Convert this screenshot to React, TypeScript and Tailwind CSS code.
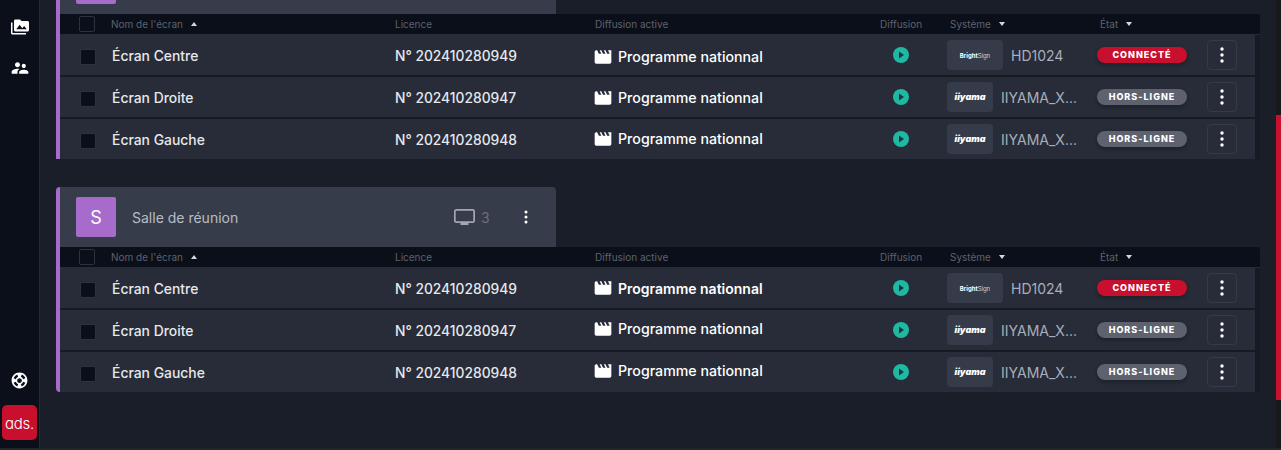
import { ReactNode } from 'react'
import { MdMovie, MdPermMedia, MdSupervisorAccount, MdSupport } from 'react-icons/md'

const screens = [
   { name: 'Écran Centre', licence: 'N° 202410280949', brand: 'brightsign', model: 'HD1024', online: true },
   { name: 'Écran Droite', licence: 'N° 202410280947', brand: 'iiyama', model: 'IIYAMA_X...', online: false },
   { name: 'Écran Gauche', licence: 'N° 202410280948', brand: 'iiyama', model: 'IIYAMA_X...', online: false },
]

// the programme cell does not sit on the same line in every row
const topProgram = ['mt-[4px]', 'mt-[2px]', 'mt-0']
const bottomProgram = ['mt-0', 'mb-[2px]', 'mb-[2px]']

const Caret = ({ up }: { up?: boolean }) => (
   <svg width="6" height="4" viewBox="0 0 6 4" className="ml-[8px] fill-[#d5d8de]">
      <path d={up ? 'M3 0 6 4H0z' : 'M0 0h6L3 4z'} />
   </svg>
)

const Dots = () => (
   <svg width="4" height="16" viewBox="0 0 4 16" className="fill-white">
      <circle cx="2" cy="2" r="1.7" />
      <circle cx="2" cy="8" r="1.7" />
      <circle cx="2" cy="14" r="1.7" />
   </svg>
)

const Play = () => (
   <svg width="16" height="16" viewBox="0 0 16 16">
      <circle cx="8" cy="8" r="8" className="fill-[#1fb8a3]" />
      <path d="M6 4.6 11 8l-5 3.4z" className="fill-[#21343f]" />
   </svg>
)

const Check = ({ dark }: { dark?: boolean }) => (
   <div className={`h-[16px] w-[16px] rounded-[2px] border border-[#2c3340] ${dark ? 'bg-[#0b0f19]' : 'bg-transparent'}`} />
)

const HeadCell = ({ className, children }: { className: string; children: ReactNode }) => (
   <div className={`flex items-center text-[10px] text-[#5d626e] ${className}`}>{children}</div>
)

const Row = ({ s, programClass, boldProgram }: { s: (typeof screens)[number]; programClass: string; boldProgram?: boolean }) => (
   <div className="flex h-[40px] w-[1195px] items-center bg-[#272c38]">
      <div className="ml-[20px] mt-[4px] w-[32px]">
         <Check dark />
      </div>
      <div className="mt-[2px] w-[283px] text-[13.9px] font-medium text-[#e6e8ec]">{s.name}</div>
      <div className="mt-[2px] w-[200px] text-[13.8px] font-medium text-[#e6e8ec]">{s.licence}</div>
      <div className={`flex w-[285px] items-center ${programClass}`}>
         <MdMovie size={20} className="-ml-[2px] text-white" />
         <span className={`ml-[5px] text-white ${boldProgram ? 'text-[14px] font-semibold' : 'text-[14.2px] font-medium'}`}>Programme nationnal</span>
      </div>
      <div className="w-[67px] pl-[13px]">
         <Play />
      </div>
      <div className="flex w-[150px] items-center">
         <div className={`flex h-[30px] items-center justify-center rounded-[4px] bg-[#353b48] ${s.brand === 'brightsign' ? 'w-[56px]' : 'w-[46px]'}`}>
            {s.brand === 'brightsign' ? (
               <span className="text-[6px] font-bold text-white">
                  Bright<span className="font-normal text-[#d5d8de]">Sign</span>
               </span>
            ) : (
               <span className="text-[9px] font-black italic text-white">iiyama</span>
            )}
         </div>
         <span className="ml-[8px] text-[14px] text-[#a9aeb8]">{s.model}</span>
      </div>
      <div className="w-[110px]">
         <div
            className={`flex h-[16px] w-[90px] items-center justify-center rounded-full text-[9px] font-extrabold tracking-[1px] text-white shadow-[0_2px_4px_rgba(0,0,0,0.3)] ${s.online ? 'bg-[#c8102e]' : 'bg-[#5e626e]'}`}
         >
            {s.online ? 'CONNECTÉ' : 'HORS-LIGNE'}
         </div>
      </div>
      <div className="flex h-[30px] w-[30px] items-center justify-center rounded-[4px] border border-[#343a47]">
         <Dots />
      </div>
   </div>
)

const Table = ({ programs, boldFirst }: { programs: string[]; boldFirst?: boolean }) => (
   <div className="w-[1200px] bg-[#161a22]">
      <div className="flex h-[20px] items-center rounded-tr-[3px] bg-[#0b0f19]">
         <div className="ml-[19px] w-[32px]">
            <Check />
         </div>
         <HeadCell className="w-[284px]">
            Nom de l'écran
            <Caret up />
         </HeadCell>
         <HeadCell className="w-[200px]">Licence</HeadCell>
         <HeadCell className="w-[285px]">Diffusion active</HeadCell>
         <HeadCell className="w-[70px]">Diffusion</HeadCell>
         <HeadCell className="w-[150px]">
            Système
            <Caret />
         </HeadCell>
         <HeadCell className="w-[100px]">
            État
            <Caret />
         </HeadCell>
      </div>
      <div className="flex flex-col gap-[2px] border-t border-[#272c38]">
         {screens.map((s, i) => (
            <Row key={s.name} s={s} programClass={programs[i]} boldProgram={boldFirst && i === 0} />
         ))}
      </div>
   </div>
)

export default function App() {
   return (
      <div className="flex h-[450px] w-[1281px] flex-col overflow-hidden bg-[#1a1e29] font-['Inter','Noto_Sans',sans-serif]">
         <div className="flex h-[448px]">
            <aside className="flex h-full w-[40px] flex-col items-center border-r border-[#262b36] bg-[#0b0f19] pt-[18px]">
               <MdPermMedia size={18} className="text-white" />
               <MdSupervisorAccount size={20} className="mt-[22px] text-white" />
               <MdSupport size={19} className="mt-auto text-white" />
               <div className="mb-[8px] mt-[15px] flex h-[35px] w-[35px] items-center justify-center rounded-[5px] bg-[#c8102e] pt-[1px] text-[15px] font-light leading-none tracking-[-0.2px] text-white [font-feature-settings:'cv11']">
                  ads.
               </div>
            </aside>
            <main className="ml-[16px] flex flex-col gap-[27px]">
               {/* first group is scrolled, only the foot of its header shows */}
               <section className="w-[1204px] border-l-[4px] border-[#a76bcc]">
                  <div className="h-[14px] w-[496px] bg-[#363c49] pl-[16px]">
                     <div className="h-[4px] w-[40px] rounded-b-[2px] bg-[#a76bcc]" />
                  </div>
                  <Table programs={topProgram} />
               </section>
               <section className="mt-[1px] w-[1204px] rounded-l-[4px] border-l-[4px] border-[#a76bcc]">
                  <div className="flex h-[60px] w-[496px] items-center rounded-tr-[4px] bg-[#363c49] pl-[16px]">
                     <div className="flex h-[40px] w-[40px] items-center justify-center rounded-[2px] bg-[#a76bcc] text-[18px] text-white">S</div>
                     <div className="ml-[16px] w-[322px] text-[14px] text-[#b8bcc4]">Salle de réunion</div>
                     <svg width="21" height="16" viewBox="0 0 21 16" fill="none" className="stroke-[#a2a7b1]">
                        <rect x="0.85" y="0.85" width="19.3" height="12.3" rx="1.5" strokeWidth="1.7" />
                        <path d="M6.5 15h8" strokeWidth="2" />
                     </svg>
                     <span className="ml-[6px] text-[14px] text-[#6b707c]">3</span>
                     <div className="ml-[34px]">
                        <svg width="4" height="14" viewBox="0 0 4 14" className="fill-white">
                           <circle cx="2" cy="2" r="1.5" />
                           <circle cx="2" cy="7" r="1.5" />
                           <circle cx="2" cy="12" r="1.5" />
                        </svg>
                     </div>
                  </div>
                  <Table programs={bottomProgram} boldFirst />
               </section>
            </main>
            <div className="ml-auto h-full w-[5px] bg-[#17191d]">
               <div className="mt-[115px] h-[285px] w-[5px] bg-[#c8102e]" />
            </div>
         </div>
         <div className="h-[2px] bg-[#22252a]" />
      </div>
   )
}
